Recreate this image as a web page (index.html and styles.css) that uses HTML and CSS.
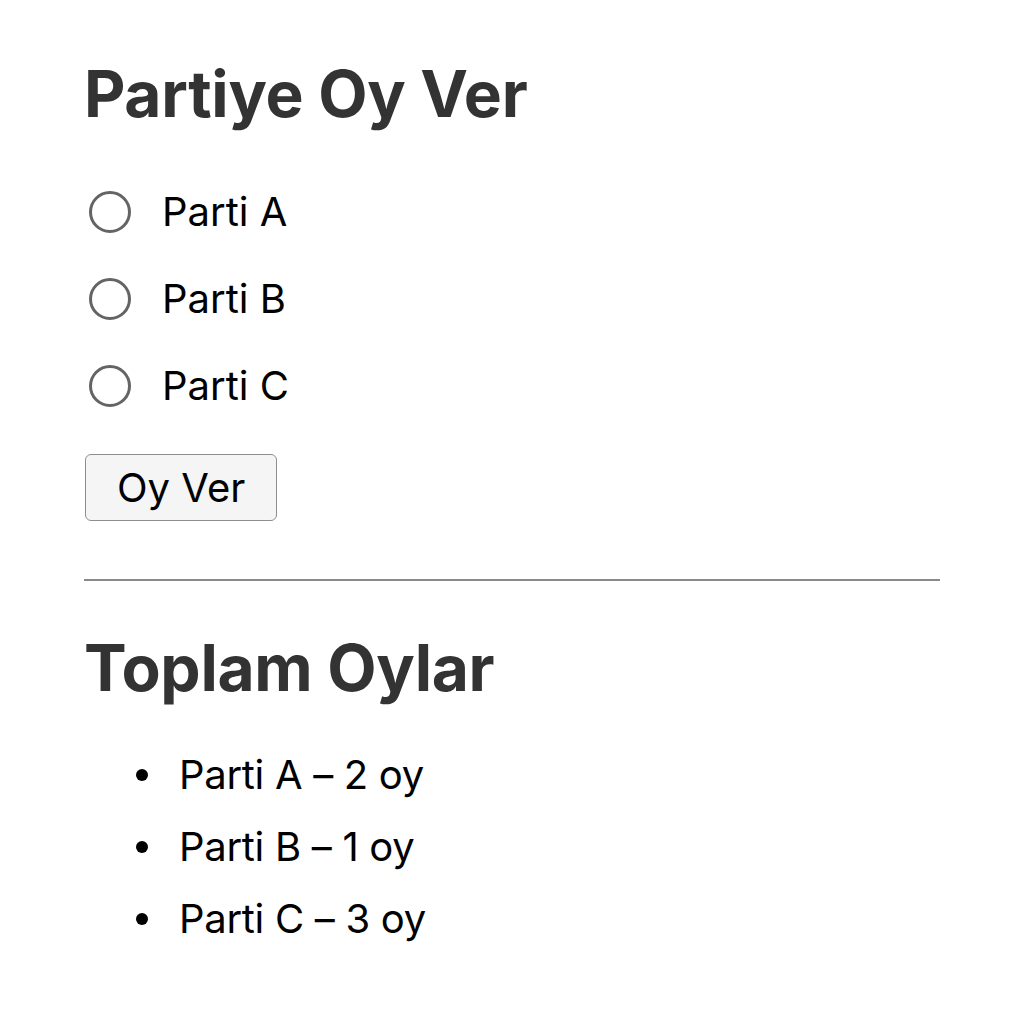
FILE: index.html
```html
<!DOCTYPE html>
<html lang="tr">
<head>
<meta charset="utf-8">
<title>Partiye Oy Ver</title>
<link rel="stylesheet" href="styles.css">
</head>
<body>
<main class="page">
  <h1 class="title">Partiye Oy Ver</h1>
  <form class="vote-form">
    <div class="options">
      <label class="option"><input type="radio" name="parti" value="A" class="radio"><span>Parti A</span></label>
      <label class="option"><input type="radio" name="parti" value="B" class="radio"><span>Parti B</span></label>
      <label class="option"><input type="radio" name="parti" value="C" class="radio"><span>Parti C</span></label>
    </div>
    <button type="button" class="vote-btn">Oy Ver</button>
  </form>
  <hr class="divider">
  <h2 class="title title-results">Toplam Oylar</h2>
  <ul class="results">
    <li class="result">Parti A – 2 oy</li>
    <li class="result">Parti B – 1 oy</li>
    <li class="result">Parti C – 3 oy</li>
  </ul>
</main>
</body>
</html>
```
FILE: styles.css
```css
* { box-sizing: border-box; }
html, body { margin: 0; padding: 0; background: #fff; }
body {
  font-family: Inter, "Noto Sans", "Liberation Sans", sans-serif;
  color: #000;
}
.page {
  padding: 56px 84px 40px 84px;
}
.title {
  margin: 0;
  font-size: 64px;
  line-height: 76px;
  font-weight: 700;
  color: #333;
  letter-spacing: -0.3px;
}
.vote-form {
  margin-top: 56px;
}
.options {
  display: flex;
  flex-direction: column;
  gap: 39px;
}
.option {
  display: flex;
  align-items: center;
  gap: 31px;
  font-size: 40px;
  line-height: 48px;
  padding-left: 5px;
}
.radio {
  appearance: none;
  -webkit-appearance: none;
  margin: 0;
  width: 42px;
  height: 42px;
  border: 3px solid #646464;
  border-radius: 50%;
  background: #fff;
  flex: none;
}
.vote-btn {
  margin-top: 44px;
  margin-left: 1px;
  height: 67px;
  padding: 0 31px;
  font-family: inherit;
  font-size: 40px;
  color: #000;
  background: #f5f5f5;
  border: 1.5px solid #8e8e8e;
  border-radius: 6px;
}
.divider {
  margin: 58px 0 0 0;
  border: 0;
  border-top: 2px solid #8a8a8a;
  height: 0;
}
.title-results {
  margin-top: 49px;
}
.results {
  list-style: none;
  margin: 33px 0 0 0;
  padding: 0 0 0 52px;
}
.result {
  display: flex;
  align-items: center;
  gap: 31px;
  font-size: 40px;
  line-height: 72px;
  letter-spacing: -0.3px;
}
.result::before {
  content: "";
  width: 12px;
  height: 12px;
  border-radius: 50%;
  background: #000;
  flex: none;
}
```
